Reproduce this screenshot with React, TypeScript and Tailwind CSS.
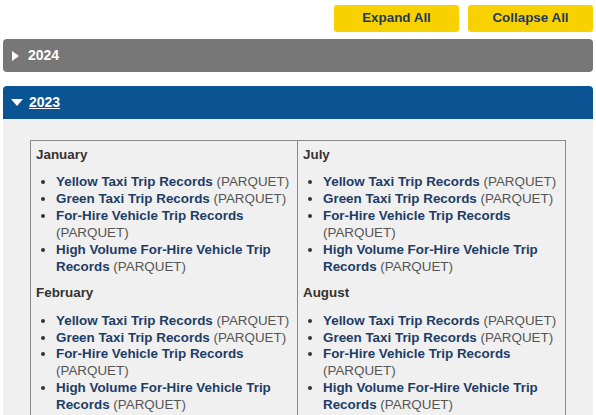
import React from 'react'

const months: [string, string][] = [
  ['January', 'July'],
  ['February', 'August'],
  ['March', 'September'],
  ['April', 'October'],
  ['May', 'November'],
  ['June', 'December'],
]

const records = [
  'Yellow Taxi Trip Records',
  'Green Taxi Trip Records',
  'For-Hire Vehicle Trip Records',
  'High Volume For-Hire Vehicle Trip Records',
]

function MonthBlock({ name }: { name: string }) {
  return (
    <div className="pt-[6px]">
      <div className="font-bold text-[#333333]">{name}</div>
      <ul className="list-disc pl-[20px] mt-[10.5px] mb-[4px] marker:text-[#333333]">
        {records.map((r) => (
          <li key={r}>
            <a href="#" className="font-bold text-[#1d3d66]">
              {r}
            </a>{' '}
            <span className="text-[#555555]">(PARQUET)</span>
          </li>
        ))}
      </ul>
    </div>
  )
}

export default function App() {
  return (
    <div className="h-screen overflow-hidden bg-white px-[3px] font-['Liberation_Sans',Arial,sans-serif] text-[13.4px] leading-[16.85px]">
      {/* Toolbar */}
      <div className="flex justify-end gap-[9px] pt-[5px]">
        <button className="w-[125px] h-[27px] rounded-[3px] bg-[#f8d100] font-bold text-[#1f3a5c]">Expand All</button>
        <button className="w-[125px] h-[27px] rounded-[3px] bg-[#f8d100] font-bold text-[#1f3a5c]">Collapse All</button>
      </div>

      {/* 2024 (collapsed) */}
      <div className="mt-[7px] h-[33px] rounded-[4px] bg-[#777777] flex items-center pl-[9px] gap-[9px] text-white font-bold text-[14px]">
        <span className="w-0 h-0 border-y-[5px] border-y-transparent border-l-[7px] border-l-white" />
        <span>2024</span>
      </div>

      {/* 2023 (expanded) */}
      <div className="mt-[14px]">
        <div className="h-[33px] rounded-t-[4px] bg-[#0b5494] flex items-center pl-[8px] gap-[6px] text-white font-bold text-[14px]">
          <span className="w-0 h-0 border-x-[6px] border-x-transparent border-t-[7px] border-t-white" />
          <span className="underline">2023</span>
        </div>
        <div className="bg-[#f0f0f0] pt-[21px] px-[27px] pb-[20px]">
          <div className="grid grid-cols-2 border border-[#8a8a8a]">
            {[0, 1].map((col) => (
              <div key={col} className={col === 0 ? 'px-[5px] border-r border-[#8a8a8a]' : 'px-[5px]'}>
                {months.map((m) => (
                  <MonthBlock key={m[col]} name={m[col]} />
                ))}
              </div>
            ))}
          </div>
        </div>
      </div>
    </div>
  )
}
